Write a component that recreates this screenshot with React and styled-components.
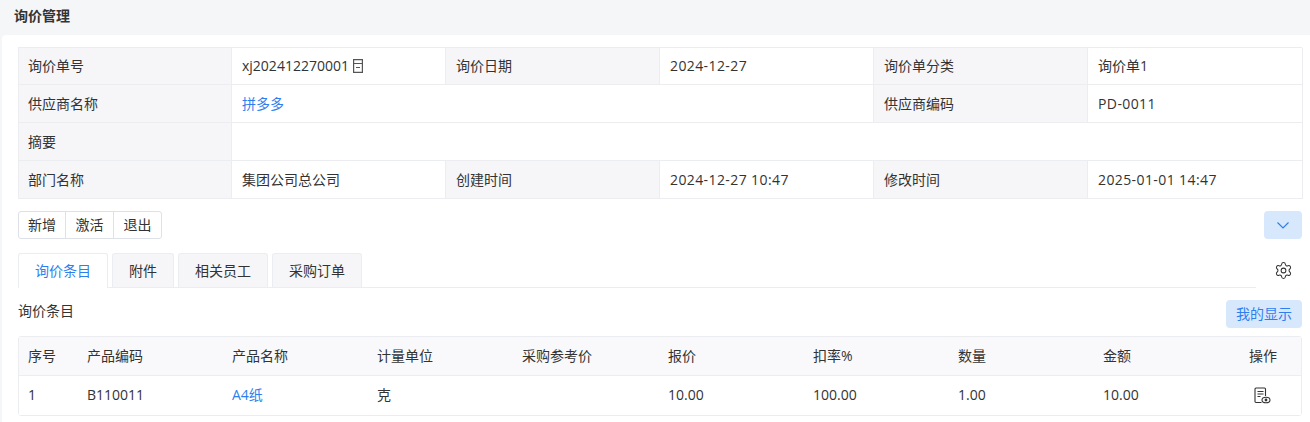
import React from "react";
import styled, { createGlobalStyle } from "styled-components";
import { Settings as SettingsIcon } from "lucide-react";

const GlobalStyle = createGlobalStyle`
  html, body {
    margin: 0;
    padding: 0;
    background: #f5f6f8;
    color: #333;
    font-family: "Open Sans", "Noto Sans CJK SC", sans-serif;
    font-size: 14px;
    line-height: 20px;
  }
`;

const Page = styled.div`
  width: 1310px;
  height: 422px;
  overflow: hidden;
`;

const Header = styled.div`
  height: 35px;
  padding: 0 0 4px 14px;
  display: flex;
  align-items: center;
  font-size: 14px;
  font-weight: 700;
  box-sizing: border-box;
`;

const Panel = styled.div`
  margin-left: 2px;
  height: 387px;
  background: #fff;
  border-radius: 4px 0 0 0;
  padding: 12px 8px 0 16px;
  box-sizing: border-box;
`;

const Descriptions = styled.div`
  display: grid;
  grid-template-columns: 213px 214px 214px 214px 214px 215px;
  grid-template-rows: 37px 38px 38px 38px;
  border-top: 1px solid #ebedf0;
  border-left: 1px solid #ebedf0;
`;

const Label = styled.div`
  background: #f6f6f9;
  border-right: 1px solid #ebedf0;
  border-bottom: 1px solid #ebedf0;
  padding-left: ${(p) => (p.$lead ? "9px" : "10px")};
  display: flex;
  align-items: center;
  box-sizing: border-box;
`;

const Value = styled.div`
  grid-column: span ${(p) => p.$span || 1};
  border-right: 1px solid #ebedf0;
  border-bottom: 1px solid #ebedf0;
  padding-left: 10px;
  display: flex;
  align-items: center;
  box-sizing: border-box;
  letter-spacing: ${(p) => (p.$stamp ? "0.4px" : "0")};
  color: ${(p) => (p.$link ? "#2d7ff0" : "#333")};
`;

const CopyMark = styled.svg`
  margin-left: 4px;
  flex: none;
`;

const Toolbar = styled.div`
  display: flex;
  justify-content: space-between;
  margin-top: 12px;
`;

const ButtonGroup = styled.div`
  display: flex;
  height: 28px;
  border: 1px solid #dfe1e8;
  border-radius: 3px;
  box-sizing: border-box;
`;

const GroupButton = styled.div`
  width: 46px;
  display: flex;
  align-items: center;
  justify-content: center;
  box-sizing: border-box;
  & + & {
    border-left: 1px solid #dfe1e8;
    width: 48px;
  }
`;

const SoftButton = styled.div`
  height: 28px;
  width: ${(p) => p.$width}px;
  background: #d8e8fc;
  color: #2d7ff0;
  border-radius: 4px;
  display: flex;
  align-items: center;
  justify-content: center;
`;

const TabRow = styled.div`
  display: flex;
  align-items: flex-start;
  margin-top: 14px;
`;

const Tabs = styled.div`
  width: 1238px;
  height: 35px;
  display: flex;
  gap: 4px;
  border-bottom: 1px solid #ebedf0;
  box-sizing: border-box;
`;

const Tab = styled.div`
  height: ${(p) => (p.$active ? "35px" : "34px")};
  padding: 0 16px;
  display: flex;
  align-items: center;
  background: ${(p) => (p.$active ? "#fff" : "#f6f6f9")};
  color: ${(p) => (p.$active ? "#2d7ff0" : "#333")};
  border: 1px solid #ebedf0;
  border-bottom: none;
  border-radius: 3px 3px 0 0;
  box-sizing: border-box;
`;

const Settings = styled.div`
  margin-left: 18px;
  padding-top: 8px;
  display: flex;
  color: #333;
`;

const SectionHead = styled.div`
  display: flex;
  justify-content: space-between;
  align-items: flex-start;
  margin-top: 12px;
`;

const SectionTitle = styled.div`
  margin-top: 1px;
`;

const Table = styled.div`
  margin-top: 8px;
  border: 1px solid #ebedf0;
  border-radius: 3px;
`;

const Row = styled.div`
  display: grid;
  grid-template-columns: 59px 145px 145px 145px 146px 145px 145px 145px 146px 1fr;
  height: 39px;
  padding-bottom: ${(p) => (p.$head ? "0" : "1px")};
  background: ${(p) => (p.$head ? "#f9f9fb" : "#fff")};
  border-bottom: ${(p) => (p.$head ? "1px solid #ebedf0" : "none")};
  box-sizing: border-box;
`;

const Cell = styled.div`
  padding-left: 9px;
  display: flex;
  align-items: center;
  color: ${(p) => (p.$link ? "#2d7ff0" : "#333")};
`;

const ActionCell = styled(Cell)`
  padding-left: ${(p) => p.$inset}px;
`;

const Chevron = () => (
  <svg width="14" height="14" viewBox="0 0 14 14" fill="none" stroke="#2d7ff0" strokeWidth="1.2">
    <path d="M1.5 4.5 7 10 12.5 4.5" />
  </svg>
);

const ViewDoc = () => (
  <svg width="17" height="17" viewBox="0 0 17 17" fill="none" stroke="#333" strokeWidth="1.1">
    <path d="M7.5 15.5H2a1 1 0 0 1-1-1V2a1 1 0 0 1 1-1h8.5a1 1 0 0 1 1 1v7" />
    <path d="M3.5 4.5h6M3.5 7h6M3.5 9.5h3" />
    <ellipse cx="12" cy="13" rx="4" ry="2.8" fill="#fff" />
    <circle cx="12" cy="13" r="1.4" fill="#333" stroke="none" />
  </svg>
);

const columns = ["序号", "产品编码", "产品名称", "计量单位", "采购参考价", "报价", "扣率%", "数量", "金额"];

export default function App() {
  return (
    <Page>
      <GlobalStyle />
      <Header>询价管理</Header>
      <Panel>
        <Descriptions>
          <Label $lead>询价单号</Label>
          <Value>
            xj202412270001
            <CopyMark width="10" height="14" viewBox="0 0 10 14" fill="none" stroke="#555" strokeWidth="1.2">
              <path d="M.6.6h8.8v12.8H.6zM.6 4.5h8.8M3 8.5h4" />
            </CopyMark>
          </Value>
          <Label>询价日期</Label>
          <Value $stamp>2024-12-27</Value>
          <Label>询价单分类</Label>
          <Value>询价单1</Value>
          <Label $lead>供应商名称</Label>
          <Value $span={3} $link>拼多多</Value>
          <Label>供应商编码</Label>
          <Value $stamp>PD-0011</Value>
          <Label $lead>摘要</Label>
          <Value $span={5} />
          <Label $lead>部门名称</Label>
          <Value>集团公司总公司</Value>
          <Label>创建时间</Label>
          <Value $stamp>2024-12-27 10:47</Value>
          <Label>修改时间</Label>
          <Value $stamp>2025-01-01 14:47</Value>
        </Descriptions>
        <Toolbar>
          <ButtonGroup>
            <GroupButton>新增</GroupButton>
            <GroupButton>激活</GroupButton>
            <GroupButton>退出</GroupButton>
          </ButtonGroup>
          <SoftButton $width={38}><Chevron /></SoftButton>
        </Toolbar>
        <TabRow>
          <Tabs>
            <Tab $active>询价条目</Tab>
            <Tab>附件</Tab>
            <Tab>相关员工</Tab>
            <Tab>采购订单</Tab>
          </Tabs>
          <Settings><SettingsIcon size={19} strokeWidth={1.3} /></Settings>
        </TabRow>
        <SectionHead>
          <SectionTitle>询价条目</SectionTitle>
          <SoftButton $width={76}>我的显示</SoftButton>
        </SectionHead>
        <Table>
          <Row $head>
            {columns.map((c) => <Cell key={c}>{c}</Cell>)}
            <ActionCell $inset={9}>操作</ActionCell>
          </Row>
          <Row>
            <Cell>1</Cell>
            <Cell>B110011</Cell>
            <Cell $link>A4纸</Cell>
            <Cell>克</Cell>
            <Cell />
            <Cell>10.00</Cell>
            <Cell>100.00</Cell>
            <Cell>1.00</Cell>
            <Cell>10.00</Cell>
            <ActionCell $inset={14}><ViewDoc /></ActionCell>
          </Row>
        </Table>
      </Panel>
    </Page>
  );
}
